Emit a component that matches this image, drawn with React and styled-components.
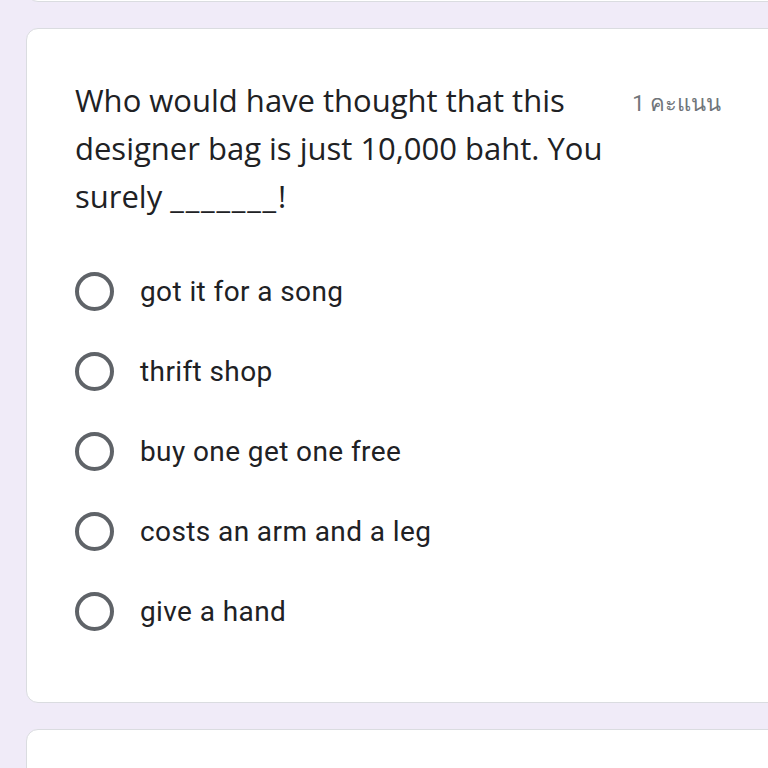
import React from "react";
import styled, { createGlobalStyle } from "styled-components";

const Global = createGlobalStyle`
  html, body { margin: 0; padding: 0; background: #f0ebf8; }
  body { overflow: hidden; }
`;

const Page = styled.div`
  padding-left: 26px;
  width: 768px;
  box-sizing: border-box;
  height: 768px;
  overflow: hidden;
`;

const Stack = styled.div`
  display: flex;
  flex-direction: column;
  gap: 26px;
  margin-top: -40px;
`;

const Card = styled.div`
  background: #fff;
  border: 1px solid #dadce0;
  border-radius: 12px;
  box-sizing: border-box;
  width: 760px;
  height: ${(p) => p.$h}px;
  flex-shrink: 0;
`;

const QuestionCard = styled(Card)`
  padding: 47px 0 0 48px;
`;

const Header = styled.div`
  display: flex;
  align-items: flex-start;
  justify-content: space-between;
  width: 646px;
`;

const Title = styled.div`
  font-family: "Open Sans", sans-serif;
  font-size: 31px;
  line-height: 48px;
  color: #202124;
  width: 560px;
`;

const Blank = styled.span`
  letter-spacing: 1.8px;
`;

const Points = styled.div`
  font-family: Roboto, "Noto Sans", sans-serif;
  font-size: 22px;
  line-height: 48px;
  color: #70757a;
  white-space: nowrap;
  margin-top: 4px;
`;

const Options = styled.div`
  display: flex;
  flex-direction: column;
  margin-top: 31px;
`;

const Option = styled.label`
  display: flex;
  align-items: center;
  gap: 26px;
  height: 80px;
`;

const Radio = styled.span`
  width: 39px;
  height: 39px;
  box-sizing: border-box;
  border: 4px solid #5f6368;
  border-radius: 50%;
  flex-shrink: 0;
`;

const OptionText = styled.span`
  font-family: Roboto, sans-serif;
  font-size: 28px;
  color: #202124;
  letter-spacing: 0.4px;
`;

const options = [
  "got it for a song",
  "thrift shop",
  "buy one get one free",
  "costs an arm and a leg",
  "give a hand",
];

export default function App() {
  return (
    <Page>
      <Global />
      <Stack>
        <Card $h={42} />
        <QuestionCard $h={675}>
          <Header>
            <Title>
              Who would have thought that this designer bag is just 10,000 baht. You surely <Blank>_______</Blank>!
            </Title>
            <Points>1 คะแนน</Points>
          </Header>
          <Options>
            {options.map((o) => (
              <Option key={o}>
                <Radio />
                <OptionText>{o}</OptionText>
              </Option>
            ))}
          </Options>
        </QuestionCard>
        <Card $h={200} />
      </Stack>
    </Page>
  );
}
